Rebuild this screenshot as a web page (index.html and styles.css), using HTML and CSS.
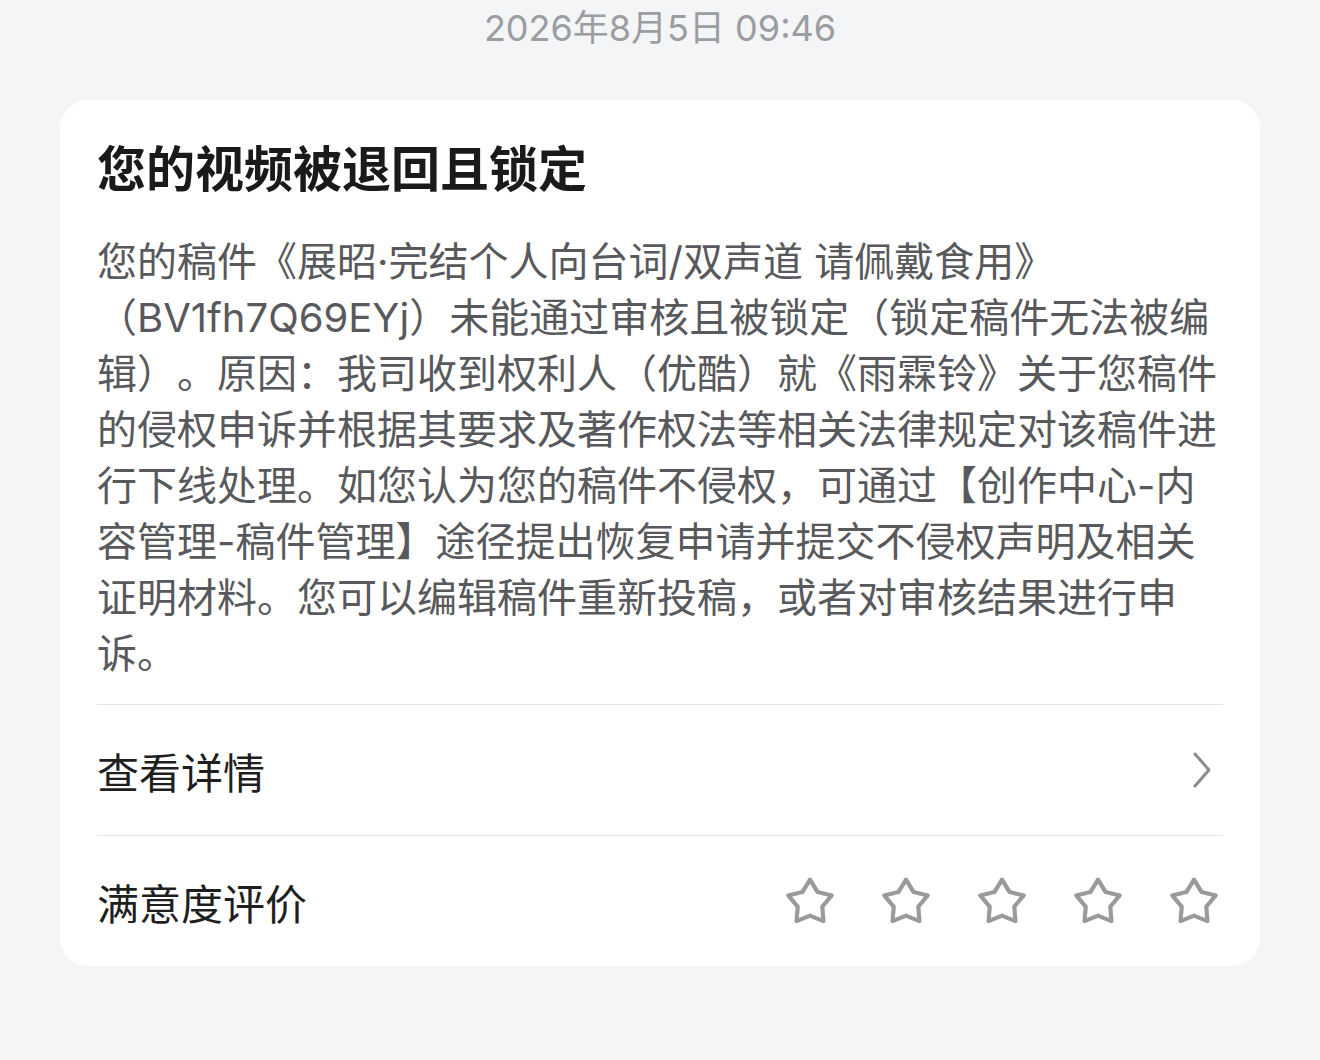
FILE: index.html
```html
<!DOCTYPE html>
<html lang="zh-CN">
<head>
    <meta charset="UTF-8">
    <meta name="viewport" content="width=device-width, initial-scale=1.0">
    <title>消息通知</title>
    <link rel="stylesheet" href="styles.css">
</head>
<body>
    <div class="time">2026年8月5日 09:46</div>

    <div class="card">
        <h2 class="title">您的视频被退回且锁定</h2>
        <p class="content">您的稿件《展昭·完结个人向台词/双声道 请佩戴食用》（BV1fh7Q69EYj）未能通过审核且被锁定（锁定稿件无法被编辑）。原因：我司收到权利人（优酷）就《雨霖铃》关于您稿件的侵权申诉并根据其要求及著作权法等相关法律规定对该稿件进行下线处理。如您认为您的稿件不侵权，可通过【创作中心-内容管理-稿件管理】途径提出恢复申请并提交不侵权声明及相关证明材料。您可以编辑稿件重新投稿，或者对审核结果进行申诉。</p>

        <div class="row">
            <span>查看详情</span>
            <svg class="arrow" width="22" height="38" viewBox="0 0 22 38">
                <path d="M4 3 L18 19 L4 35" fill="none" stroke="#8c8c8c" stroke-width="3" stroke-linecap="round" stroke-linejoin="round"/>
            </svg>
        </div>

        <div class="row">
            <span>满意度评价</span>
            <div class="stars">
                <svg width="50" height="50" viewBox="0 0 48 48"><polygon points="24,3.5 31.3,15.4 44.9,18.7 35.8,29.3 36.9,43.3 24,38 11.1,43.3 12.2,29.3 3.1,18.7 16.7,15.4" fill="none" stroke="#999a9c" stroke-width="4" stroke-linejoin="round"/></svg>
                <svg width="50" height="50" viewBox="0 0 48 48"><polygon points="24,3.5 31.3,15.4 44.9,18.7 35.8,29.3 36.9,43.3 24,38 11.1,43.3 12.2,29.3 3.1,18.7 16.7,15.4" fill="none" stroke="#999a9c" stroke-width="4" stroke-linejoin="round"/></svg>
                <svg width="50" height="50" viewBox="0 0 48 48"><polygon points="24,3.5 31.3,15.4 44.9,18.7 35.8,29.3 36.9,43.3 24,38 11.1,43.3 12.2,29.3 3.1,18.7 16.7,15.4" fill="none" stroke="#999a9c" stroke-width="4" stroke-linejoin="round"/></svg>
                <svg width="50" height="50" viewBox="0 0 48 48"><polygon points="24,3.5 31.3,15.4 44.9,18.7 35.8,29.3 36.9,43.3 24,38 11.1,43.3 12.2,29.3 3.1,18.7 16.7,15.4" fill="none" stroke="#999a9c" stroke-width="4" stroke-linejoin="round"/></svg>
                <svg width="50" height="50" viewBox="0 0 48 48"><polygon points="24,3.5 31.3,15.4 44.9,18.7 35.8,29.3 36.9,43.3 24,38 11.1,43.3 12.2,29.3 3.1,18.7 16.7,15.4" fill="none" stroke="#999a9c" stroke-width="4" stroke-linejoin="round"/></svg>
            </div>
        </div>
    </div>
</body>
</html>
```

FILE: styles.css
```css
body {
    font-family: Inter, "Noto Sans CJK SC", sans-serif;
    background-color: #f3f5f6;
    margin: 0;
    padding: 0;
    text-spacing-trim: space-all;
}
.time {
    height: 56px;
    line-height: 56px;
    text-align: center;
    font-size: 36px;
    color: #9b9da1;
    margin-bottom: 44px;
}
.card {
    background-color: white;
    margin: 0 60px;
    padding: 40px 37px 0 37px;
    border-radius: 28px;
}
.title {
    margin: 0;
    font-size: 49px;
    line-height: 60px;
    font-weight: 700;
    color: #1a1a1a;
}
.content {
    margin: 34px 0 22px 0;
    font-size: 40px;
    line-height: 56px;
    color: #58595c;
}
.row {
    display: flex;
    align-items: center;
    justify-content: space-between;
    height: 130px;
    border-top: 1px solid #e3e4e6;
    font-size: 42px;
    color: #1f1f1f;
}
.arrow {
    margin-right: 10px;
}
.stars {
    display: flex;
    gap: 46px;
    margin-right: 4px;
}
```
